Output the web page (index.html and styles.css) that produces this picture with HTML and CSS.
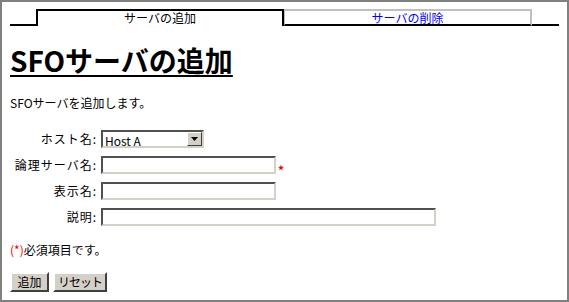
FILE: index.html
```html
<!DOCTYPE html>
<html lang="ja">
<head>
  <meta charset="UTF-8">
  <title>SFOサーバの追加</title>
  <link rel="stylesheet" href="styles.css">
</head>
<body>
  <div class="frame">
    <div class="tabs">
      <span class="tab-gap"></span>
      <span class="tab active">サーバの追加</span>
      <a class="tab" href="#">サーバの削除</a>
      <span class="tab-gap end"></span>
    </div>

    <h1>SFOサーバの追加</h1>
    <p class="intro">SFOサーバを追加します。</p>

    <form class="fields">
      <label for="host">ホスト名:</label>
      <div class="field">
        <span class="select">
          <select id="host"><option>Host A</option></select>
          <span class="drop"><svg width="7" height="4" viewBox="0 0 7 4"><path d="M0 0h7L3.5 4z" fill="#000"/></svg></span>
        </span>
      </div>

      <label for="name">論理サーバ名:</label>
      <div class="field"><input id="name" class="text"><span class="req">*</span></div>

      <label for="disp">表示名:</label>
      <div class="field"><input id="disp" class="text"></div>

      <label for="desc">説明:</label>
      <div class="field"><input id="desc" class="text wide"></div>
    </form>

    <p class="note"><span class="req-mark">(*)</span>必須項目です。</p>

    <div class="buttons">
      <button class="btn-add">追加</button>
      <button class="btn-reset">リセット</button>
    </div>
  </div>
</body>
</html>
```

FILE: styles.css
```css
html, body {margin:0; padding:0; background:#fff;}
body {font-family:"Noto Sans CJK JP", "DejaVu Sans", sans-serif; font-size:12px; line-height:16px; color:#000;}

/* outer window frame */
.frame {box-sizing:border-box; width:569px; height:302px; border:2px solid #808080; padding:7px 8px 0;}

/* tab strip */
.tabs {display:flex; height:17px;}
.tab-gap {width:26px; border-bottom:2px solid #000;}
.tab-gap.end {width:27px;}
.tab {box-sizing:border-box; width:248px; height:17px; text-align:center; line-height:13px; font-size:12px; text-decoration:none;}
.tab.active {border:2px solid #000; border-bottom:none; color:#000;}
a.tab {border-top:2px solid #c0c0c0; border-right:2px solid #c0c0c0; border-left:1px solid #c0c0c0; border-bottom:2px solid #000; color:#00f;}

h1 {margin:18px 0 0; font-size:28px; line-height:32px; font-weight:bold; text-decoration:underline; text-decoration-thickness:2px; text-underline-offset:3px; display:inline-block;}

.intro {margin:19px 0 0;}

/* form grid */
.fields {display:grid; grid-template-columns:87px auto; column-gap:4px; row-gap:8px; margin-top:19px; align-items:center;}
.fields label {text-align:right; letter-spacing:1px;}
.field {display:flex; align-items:flex-end; gap:2px;}

.text {box-sizing:border-box; width:175px; height:18px; margin:0; padding:0 2px; border:2px solid; border-color:#505050 #d4d0c8 #d4d0c8 #505050; font:12px "Noto Sans CJK JP", sans-serif; background:#fff;}
.text.wide {width:335px;}
.req {color:#e00; font-weight:bold; font-size:12px; line-height:8px;}

.select {box-sizing:border-box; display:flex; width:103px; height:18px; border:2px solid; border-color:#505050 #d4d0c8 #d4d0c8 #505050; background:#fff;}
.select select {appearance:none; -webkit-appearance:none; flex:1; min-width:0; border:none; outline:none; background:#fff; padding:0 0 0 2px; margin:0; font:12px "Noto Sans CJK JP", sans-serif; color:#000;}
.drop {box-sizing:border-box; width:15px; height:14px; background:#d4d0c8; border:1px solid; border-color:#fff #404040 #404040 #fff; display:flex; align-items:center; justify-content:center;}

.note {margin:16px 0 0;}
.req-mark {color:#e00;}

.buttons {display:flex; gap:4px; margin-top:14px;}
.buttons button {box-sizing:border-box; height:20px; padding:0; margin:0; background:#d4d0c8; border:2px solid; border-color:#fff #404040 #404040 #fff; font:12px "Noto Sans CJK JP", sans-serif; color:#000; line-height:14px; letter-spacing:-1px;}
.buttons .btn-add {width:39px; letter-spacing:0;}
.buttons .btn-reset {width:54px;}
```
